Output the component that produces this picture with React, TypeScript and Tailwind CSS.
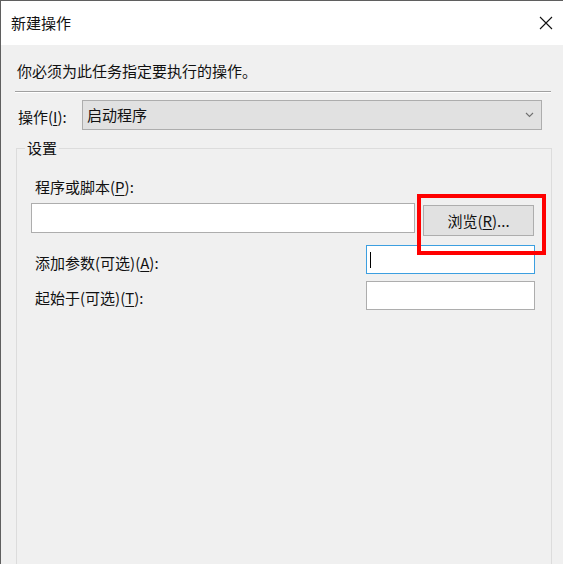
import React from 'react';

const Accel: React.FC<{ k: string }> = ({ k }) => <span className="underline underline-offset-2">{k}</span>;

const CloseIcon: React.FC = () => (
  <svg width="14" height="14" viewBox="0 0 14 14" className="block">
    <path d="M1 1 L13 13 M13 1 L1 13" stroke="#111" strokeWidth="1.1" fill="none" />
  </svg>
);

const Chevron: React.FC = () => (
  <svg width="9" height="6" viewBox="0 0 9 6" className="block">
    <path d="M1 1 L4.5 4.5 L8 1" stroke="#707070" strokeWidth="1.1" fill="none" />
  </svg>
);

export default function App() {
  return (
    <div
      className="w-[563px] h-[564px] overflow-hidden border-l border-t border-[#5f5f5f] bg-[#f0f0f0] text-[15px] leading-[20px] text-[#111]"
      style={{ fontFamily: '"Noto Sans CJK SC", "Noto Sans", sans-serif' }}
    >
      {/* title bar */}
      <div className="h-[44px] bg-white flex items-center justify-between pl-[10px] pr-[10px]">
        <span>新建操作</span>
        <CloseIcon />
      </div>

      <div className="pl-[16px] pt-[16px]">你必须为此任务指定要执行的操作。</div>

      <div className="ml-[14px] mt-[10px] w-[536px]">
        <div className="h-px bg-[#a0a0a0]"></div>
        <div className="h-px bg-white"></div>
      </div>

      {/* action select */}
      <div className="flex items-center mt-[7px] pl-[17px]">
        <label className="w-[64px] pt-[3px]">
          操作(<Accel k="I" />):
        </label>
        <div className="w-[460px] h-[30px] bg-[#e1e1e1] border border-[#adadad] flex items-center justify-between pl-[4px] pr-[7px]">
          <span>启动程序</span>
          <Chevron />
        </div>
      </div>

      {/* settings group */}
      <fieldset className="ml-[15px] mt-[8px] w-[536px] h-[440px] border border-[#dcdcdc]">
        <legend className="ml-[8px] px-[2px]">设置</legend>

        <div className="pl-[14px] pr-[16px] pt-[19px]">
          <div className="pl-[4px]">
            程序或脚本(<Accel k="P" />):
          </div>
          <div className="flex items-start mt-[6px]">
            <div className="w-[384px] h-[30px] bg-white border border-[#adadad]"></div>
            <div className="relative ml-[8px] mt-[2px]">
              <button className="w-[111px] h-[31px] bg-[#e1e1e1] border border-[#adadad] flex items-center justify-center">
                <span>
                  浏览(<Accel k="R" />)...
                </span>
              </button>
              <div className="absolute -left-[6px] -top-[11px] -right-[12px] -bottom-[19px] border-[4px] border-[#ff0000]"></div>
            </div>
          </div>

          <div className="flex items-center justify-between mt-[9px]">
            <div className="pl-[4px] pt-[6px]">
              添加参数(可选)(<Accel k="A" />):
            </div>
            <div className="w-[169px] h-[29px] bg-white border border-[#3c9fe0] flex items-center pl-[3px]">
              <div className="w-[1px] h-[16px] bg-black"></div>
            </div>
          </div>

          <div className="flex items-center justify-between mt-[7px]">
            <div className="pl-[4px] pt-[5px]">
              起始于(可选)(<Accel k="T" />):
            </div>
            <div className="w-[169px] h-[29px] bg-white border border-[#adadad]"></div>
          </div>
        </div>
      </fieldset>
    </div>
  );
}
